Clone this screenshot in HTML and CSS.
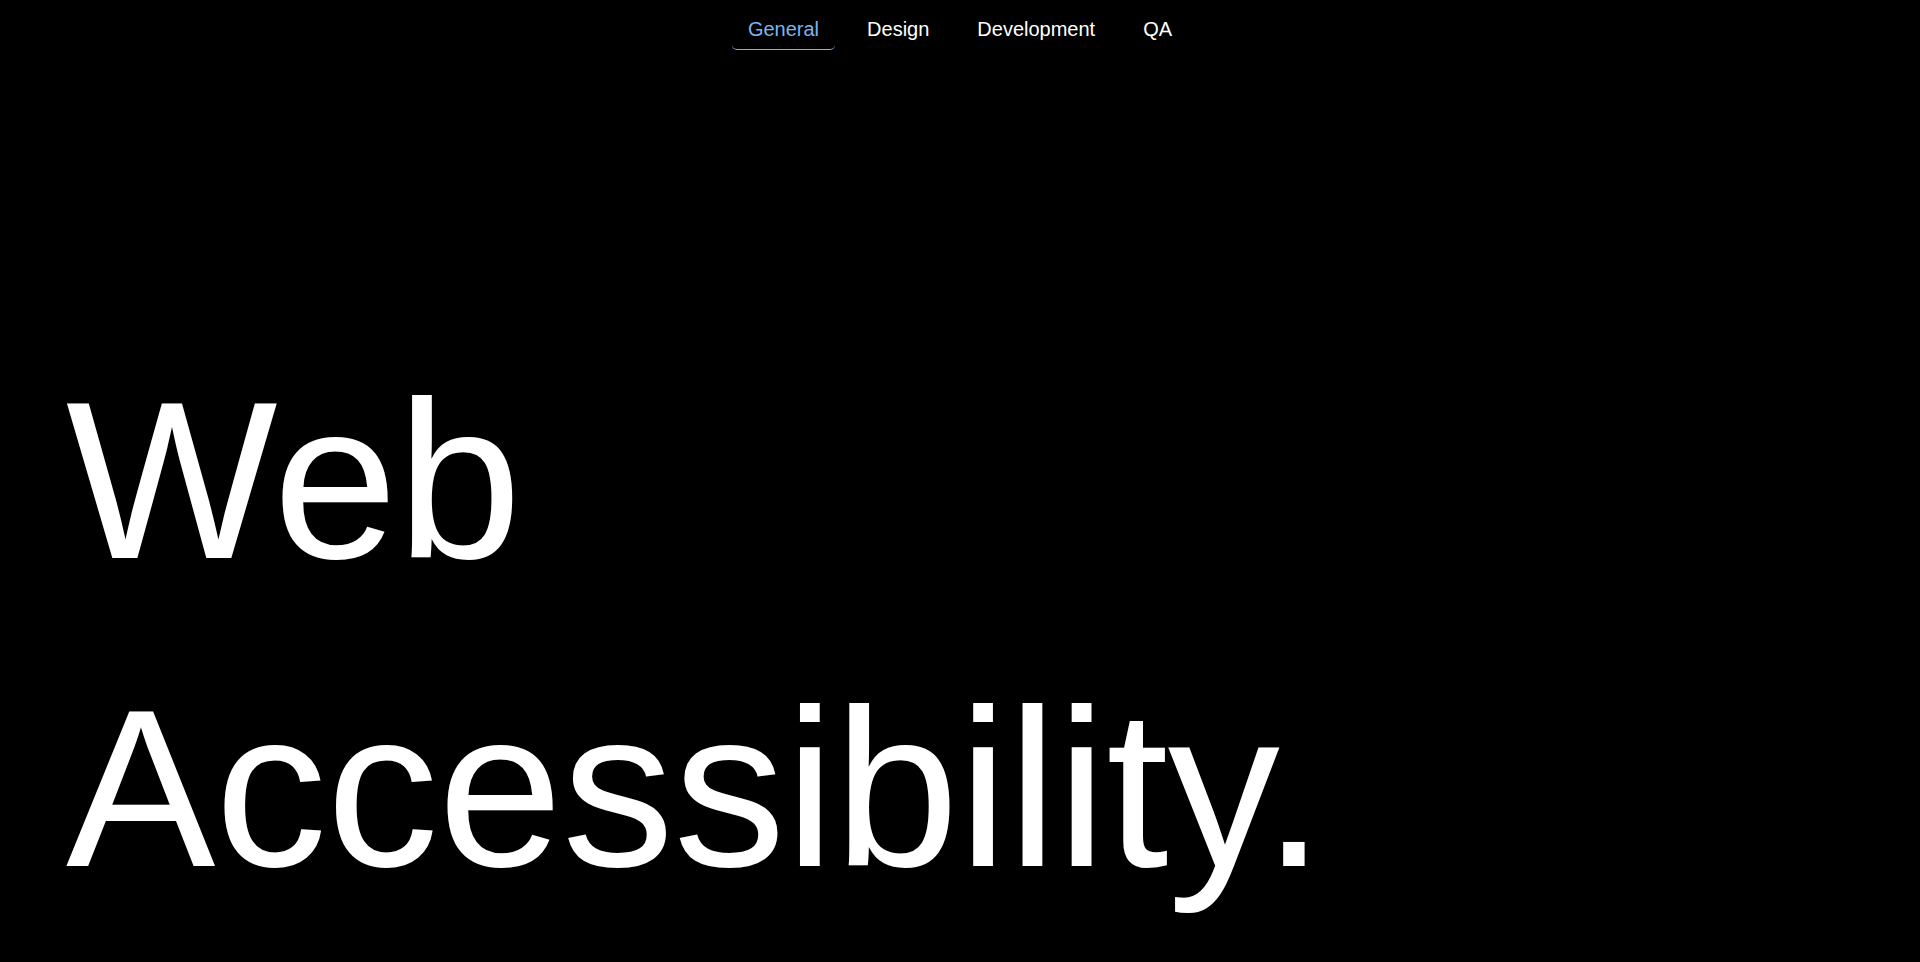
FILE: index.html
```html
<!DOCTYPE html>
<html lang="en">
<head>
<meta charset="utf-8">
<title>Web Accessibility</title>
<link rel="stylesheet" href="styles.css">
</head>
<body>
<nav class="tabs">
  <a class="tab active" href="#">General</a>
  <a class="tab" href="#">Design</a>
  <a class="tab" href="#">Development</a>
  <a class="tab" href="#">QA</a>
</nav>
<main class="hero">
  <h1 class="title"><span class="line">Web</span><span class="line">Accessibility.</span></h1>
</main>
</body>
</html>
```

FILE: styles.css
```css
html, body {
  margin: 0;
  padding: 0;
  background: #000;
  color: #fff;
  font-family: "Liberation Sans", Arial, Helvetica, sans-serif;
}

.tabs {
  display: flex;
  justify-content: center;
  gap: 16px;
  padding-top: 8px;
}

.tab {
  display: block;
  padding: 10px 16px 8px;
  font-size: 20px;
  line-height: 23px;
  color: #fff;
  text-decoration: none;
  border-bottom: 1px solid transparent;
  border-radius: 0 0 5px 5px;
}

.tab.active {
  color: #7ab4f3;
  border-bottom-color: #7ab4f3;
}

.hero {
  padding: 0 60px 0 66px;
}

.title {
  margin: 276px 0 0;
  font-size: 224px;
  font-weight: 400;
  line-height: 308px;
  letter-spacing: -0.5px;
}

.line {
  display: block;
}
```
